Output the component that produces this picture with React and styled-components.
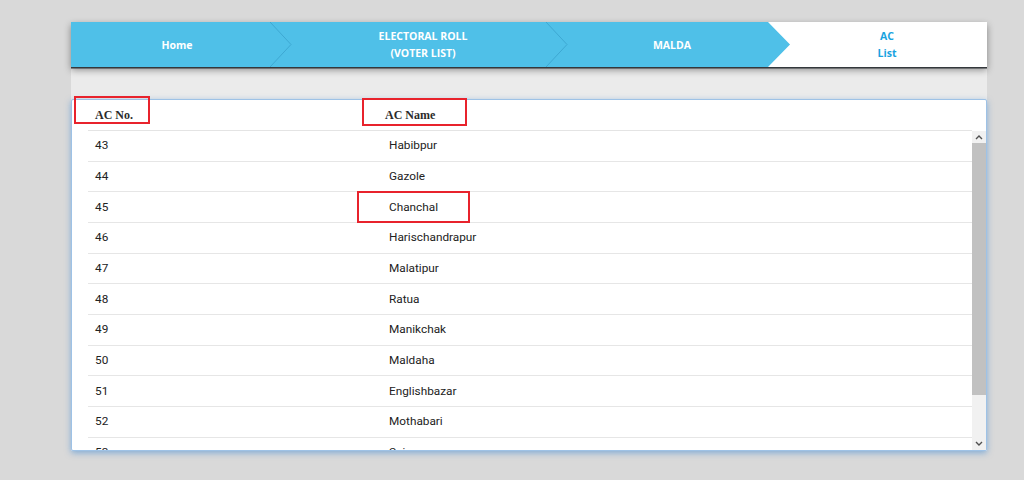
import React from 'react';
import styled, { createGlobalStyle } from 'styled-components';

const GlobalStyle = createGlobalStyle`
  html, body {
    margin: 0;
    padding: 0;
    background: #d9d9d9;
  }
`;

const Page = styled.div`
  width: 1024px;
  height: 480px;
  padding-top: 22px;
  box-sizing: border-box;
  overflow: hidden;
`;

const Container = styled.div`
  width: 916px;
  margin-left: 71px;
  background: #ebebeb;
`;

const Breadcrumb = styled.nav`
  display: flex;
  height: 45px;
  position: relative;
  z-index: 1;
  background: #4fc0e8;
  box-shadow: 0 1.5px 0 #34383c, 0 3px 7px rgba(0, 0, 0, 0.4);
  font-family: 'Open Sans', 'Liberation Sans', sans-serif;
  font-weight: 700;
  font-size: 10.5px;
  line-height: 17px;
`;

const Crumb = styled.a`
  position: relative;
  display: flex;
  align-items: center;
  justify-content: center;
  flex: 0 0 ${(p) => p.$width}px;
  box-sizing: border-box;
  padding-right: ${(p) => p.$padRight}px;
  padding-top: 1px;
  text-align: center;
  color: ${(p) => (p.$active ? '#1aa3df' : '#ffffff')};
  background: ${(p) => (p.$active ? '#ffffff' : 'transparent')};
  text-decoration: none;
`;

const Edge = styled.svg`
  position: absolute;
  top: 0;
  right: 0;
  width: 22px;
  height: 45px;
`;

const Strip = styled.div`
  height: 32px;
`;

const Panel = styled.div`
  position: relative;
  height: 352px;
  box-sizing: border-box;
  background: #fff;
  border: 1px solid #9ec2e6;
  border-radius: 2px;
  box-shadow: 0 2px 6px rgba(72, 142, 212, 0.6);
  display: flex;
  flex-direction: column;
`;

const HeadRow = styled.div`
  display: flex;
  align-items: center;
  height: 30px;
  margin-left: 16px;
  margin-right: 14px;
  border-bottom: 1px solid #e4e4e4;
  font-family: 'Liberation Serif', serif;
  font-weight: 700;
  font-size: 12px;
  color: #2b2b2b;
`;

const HeadCell = styled.div`
  flex: 0 0 ${(p) => p.$width}px;
  padding-left: 7px;
  box-sizing: border-box;
`;

const Body = styled.div`
  flex: 1;
  display: flex;
  min-height: 0;
  overflow: hidden;
`;

const List = styled.div`
  flex: 1;
  overflow: hidden;
  padding-left: 16px;
`;

const Row = styled.div`
  display: flex;
  align-items: center;
  height: 30.67px;
  box-sizing: border-box;
  border-bottom: 1px solid #e6e6e6;
  font-family: Roboto, 'Liberation Sans', sans-serif;
  font-size: 11.8px;
  color: #222;
`;

const Cell = styled.div`
  flex: 0 0 ${(p) => p.$width}px;
  padding-left: 7px;
  padding-bottom: 1px;
  box-sizing: border-box;
`;

const Scrollbar = styled.div`
  flex: 0 0 14px;
  display: flex;
  flex-direction: column;
  background: #f1f1f1;
`;

const ScrollButton = styled.div`
  height: ${(p) => p.$h}px;
  display: flex;
  align-items: center;
  justify-content: center;
`;

const Track = styled.div`
  flex: 1;
`;

const Thumb = styled.div`
  height: 252px;
  background: #c1c1c1;
`;

const Mark = styled.div`
  position: absolute;
  left: ${(p) => p.$x}px;
  top: ${(p) => p.$y}px;
  width: ${(p) => p.$w}px;
  height: ${(p) => p.$h}px;
  box-sizing: border-box;
  border: 2px solid #e8232c;
  pointer-events: none;
`;

const rows = [
  ['43', 'Habibpur'],
  ['44', 'Gazole'],
  ['45', 'Chanchal'],
  ['46', 'Harischandrapur'],
  ['47', 'Malatipur'],
  ['48', 'Ratua'],
  ['49', 'Manikchak'],
  ['50', 'Maldaha'],
  ['51', 'Englishbazar'],
  ['52', 'Mothabari'],
  ['53', 'Sujapur'],
];

const Chevron = () => (
  <Edge viewBox="0 0 22 45">
    <polyline points="0,0 21,22.5 0,45" fill="none" stroke="#3ea8d2" strokeWidth="1" />
  </Edge>
);

const Arrow = () => (
  <Edge viewBox="0 0 22 45">
    <polygon points="0,0 22,0 22,45 0,45 22,22.5" fill="#ffffff" />
  </Edge>
);

const Caret = ({ up }) => (
  <svg width="8" height="5" viewBox="0 0 8 5">
    <polyline
      points={up ? '1,4 4,1 7,4' : '1,1 4,4 7,1'}
      fill="none"
      stroke="#505050"
      strokeWidth="1.4"
    />
  </svg>
);

export default function App() {
  return (
    <Page>
      <GlobalStyle />
      <Container>
        <Breadcrumb>
          <Crumb $width={221} $padRight={9}>
            Home
            <Chevron />
          </Crumb>
          <Crumb $width={276} $padRight={14}>
            ELECTORAL ROLL
            <br />
            (VOTER LIST)
            <Chevron />
          </Crumb>
          <Crumb $width={222} $padRight={14}>
            MALDA
            <Arrow />
          </Crumb>
          <Crumb $width={197} $padRight={3} $active>
            AC
            <br />
            List
          </Crumb>
        </Breadcrumb>
        <Strip />
        <Panel>
          <HeadRow>
            <HeadCell $width={290}>AC No.</HeadCell>
            <HeadCell $width={200}>AC Name</HeadCell>
          </HeadRow>
          <Body>
            <List>
              {rows.map(([no, name]) => (
                <Row key={no}>
                  <Cell $width={294}>{no}</Cell>
                  <Cell $width={300}>{name}</Cell>
                </Row>
              ))}
            </List>
            <Scrollbar>
              <ScrollButton $h={12}>
                <Caret up />
              </ScrollButton>
              <Track>
                <Thumb />
              </Track>
              <ScrollButton $h={13}>
                <Caret />
              </ScrollButton>
            </Scrollbar>
          </Body>
          <Mark $x={2} $y={-4} $w={76} $h={28} />
          <Mark $x={290} $y={-2} $w={105} $h={28} />
          <Mark $x={285} $y={91} $w={113} $h={32} />
        </Panel>
      </Container>
    </Page>
  );
}
